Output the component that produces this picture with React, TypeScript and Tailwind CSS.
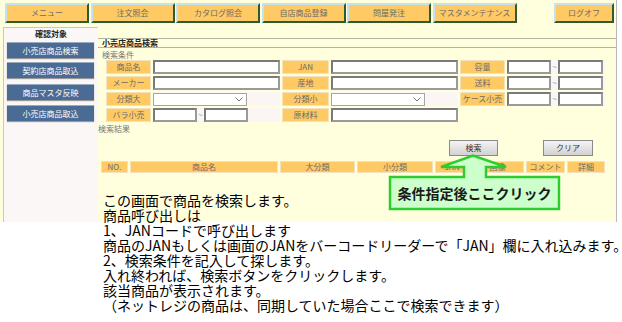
import React from "react";

const navItems = ["メニュー", "注文照会", "カタログ照会", "自店商品登録", "問屋発注", "マスタメンテナンス"];

const sideItems = [
  { label: "小売店商品検索", mt: "mt-[3px]" },
  { label: "契約店商品取込", mt: "mt-[4px]" },
  { label: "商品マスタ反映", mt: "mt-[6px]" },
  { label: "小売店商品取込", mt: "mt-[5px]" },
];

const headers = [
  { label: "NO.", w: "w-[27px]" },
  { label: "商品名", w: "w-[148px]" },
  { label: "大分類", w: "w-[75px]" },
  { label: "小分類", w: "w-[76px]" },
  { label: "JAN", w: "w-[34px]" },
  { label: "画像", w: "w-[53px]" },
  { label: "コメント", w: "w-[39px]" },
  { label: "詳細", w: "w-[38px]" },
];

const notes = [
  "この画面で商品を検索します。",
  "商品呼び出しは",
  "1、JANコードで呼び出します",
  "商品のJANもしくは画面のJANをバーコードリーダーで「JAN」欄に入れ込みます。",
  "2、検索条件を記入して探します。",
  "入れ終われば、検索ボタンをクリックします。",
  "該当商品が表示されます。",
  "（ネットレジの商品は、同期していた場合ここで検索できます）",
];

function Label({ children }: { children: React.ReactNode }) {
  return (
    <div className="h-[14px] bg-[#ffc964] border border-[#f3e2bd] flex items-center justify-center text-[8px] text-[#6b6b6b] leading-none whitespace-nowrap">
      {children}
    </div>
  );
}

function Field({ className = "" }: { className?: string }) {
  return <div className={`h-[14px] bg-white border-2 border-[#9a9a9a] border-t-[#7a7a7a] border-l-[#7a7a7a] ${className}`} />;
}

function Select({ className = "" }: { className?: string }) {
  return (
    <div className={`h-[13px] bg-white border border-[#a5a5a5] flex items-center justify-end pr-[3px] ${className}`}>
      <svg width="8" height="5" viewBox="0 0 8 5" fill="none" stroke="#777" strokeWidth="1">
        <path d="M0.5 0.5 L4 4 L7.5 0.5" />
      </svg>
    </div>
  );
}

function InputCell({ children }: { children: React.ReactNode }) {
  return <div className="h-[14px] bg-[#fbf5f3] flex items-center">{children}</div>;
}

function Range() {
  return (
    <InputCell>
      <Field className="w-[44px]" />
      <span className="w-[7px] text-center text-[8px] text-[#999] leading-none">~</span>
      <Field className="w-[45px]" />
    </InputCell>
  );
}

export default function App() {
  return (
    <div className="relative w-[622px] h-[322px] bg-white overflow-hidden" style={{ fontFamily: '"Noto Sans CJK JP", "Noto Sans", sans-serif' }}>
      <div className="w-[617px] h-[222px] bg-[#ffffde] border-r border-[#b8b8b8] flex flex-col">
        {/* top menu */}
        <div className="h-[27px] flex items-start pt-[3px] pl-[5px] pr-[2px] gap-[1.5px]">
          {navItems.map((n) => (
            <div
              key={n}
              className="w-[84px] h-[20px] bg-[#ffc964] border-2 border-t-[#c5e2ef] border-l-[#c5e2ef] border-b-[#2e5c2e] border-r-[#2e5c2e] flex items-center justify-center text-[8px] text-[#6b6b6b] whitespace-nowrap"
            >
              {n}
            </div>
          ))}
          <div className="ml-auto w-[60px] h-[20px] bg-[#ffc964] border-2 border-t-[#c5e2ef] border-l-[#c5e2ef] border-b-[#2e5c2e] border-r-[#2e5c2e] flex items-center justify-center text-[8px] text-[#6b6b6b]">
            ログオフ
          </div>
        </div>

        <div className="flex flex-1">
          {/* sidebar */}
          <div className="ml-[3px] w-[95px] bg-[#fcf7f7] border-l border-t border-[#c8c8c8] flex flex-col items-start">
            <p className="w-full text-center text-[8px] font-bold text-[#222] leading-[10px] pt-[1px]">確認対象</p>
            {sideItems.map((s) => (
              <div
                key={s.label}
                className={`${s.mt} ml-[3px] w-[87px] h-[16px] bg-[#4a6b94] border-t border-[#9aabbf] shadow-[0_1px_1px_#999] flex items-center justify-center text-[8px] text-white`}
              >
                {s.label}
              </div>
            ))}
          </div>

          {/* main */}
          <div className="flex-1 flex flex-col pt-[11px]">
            <div className="border-t border-b border-[#b4b4a4] h-[10px] pl-[4px] flex items-center text-[8px] font-bold text-[#222] leading-none">
              小売店商品検索
            </div>
            <p className="pl-[4px] mt-[2px] text-[8px] text-[#777] leading-[9px]">検索条件</p>

            <div className="ml-[8px] mt-[1px] grid grid-cols-[45px_127px_47px_127px_45px_98px] gap-x-[2px] gap-y-[2px]">
              <Label>商品名</Label>
              <InputCell><Field className="w-full" /></InputCell>
              <Label>JAN</Label>
              <InputCell><Field className="w-full" /></InputCell>
              <Label>容量</Label>
              <Range />

              <Label>メーカー</Label>
              <InputCell><Field className="w-full" /></InputCell>
              <Label>産地</Label>
              <InputCell><Field className="w-full" /></InputCell>
              <Label>送料</Label>
              <Range />

              <Label>分類大</Label>
              <InputCell><Select className="w-[94px]" /></InputCell>
              <Label>分類小</Label>
              <InputCell><Select className="w-[94px]" /></InputCell>
              <Label>ケース小売</Label>
              <Range />

              <Label>バラ小売</Label>
              <InputCell>
                <Field className="w-[44px]" />
                <span className="w-[7px] text-center text-[8px] text-[#999] leading-none">~</span>
                <Field className="w-[44px]" />
              </InputCell>
              <Label>原材料</Label>
              <InputCell><Field className="w-full" /></InputCell>
            </div>

            <p className="mt-[2px] text-[8px] text-[#777] leading-[9px]">検索結果</p>

            <div className="mt-[7px] flex h-[16px]">
              <button className="ml-[351px] w-[49px] h-[16px] bg-gradient-to-b from-[#f4f4f4] to-[#d2d2d2] border border-[#8a8a8a] text-[8px] text-[#333] leading-none">
                検索
              </button>
              <button className="ml-[45px] w-[50px] h-[16px] bg-gradient-to-b from-[#f4f4f4] to-[#d2d2d2] border border-[#8a8a8a] text-[8px] text-[#333] leading-none">
                クリア
              </button>
            </div>

            <div className="mt-[5px] ml-[3px] flex gap-[2px]">
              {headers.map((h) => (
                <div
                  key={h.label}
                  className={`${h.w} h-[12px] bg-[#ffc964] border border-[#f3e2bd] flex items-center justify-center text-[8px] text-[#6b6b6b] leading-none`}
                >
                  {h.label}
                </div>
              ))}
            </div>
          </div>
        </div>
      </div>

      {/* callout */}
      <svg className="absolute left-0 top-0" width="622" height="322" viewBox="0 0 622 322">
        <path
          d="M390 177 L464 177 L464 167 L441 167 L473 155.5 L506 167 L486 167 L486 177 L559 177 L559 209 L390 209 Z"
          fill="#ccffcc"
          stroke="#2fcc2f"
          strokeWidth="2.5"
          strokeLinejoin="miter"
        />
      </svg>
      <div className="absolute left-[390px] top-[177px] w-[169px] h-[32px] flex items-center justify-center text-[14px] font-bold text-[#1a1a1a]">
        条件指定後ここクリック
      </div>

      {/* notes */}
      <div className="absolute left-[103px] top-[193px] text-[14px] leading-[15px] text-black whitespace-nowrap">
        {notes.map((n) => (
          <p key={n} className="h-[15px]">{n}</p>
        ))}
      </div>
    </div>
  );
}
